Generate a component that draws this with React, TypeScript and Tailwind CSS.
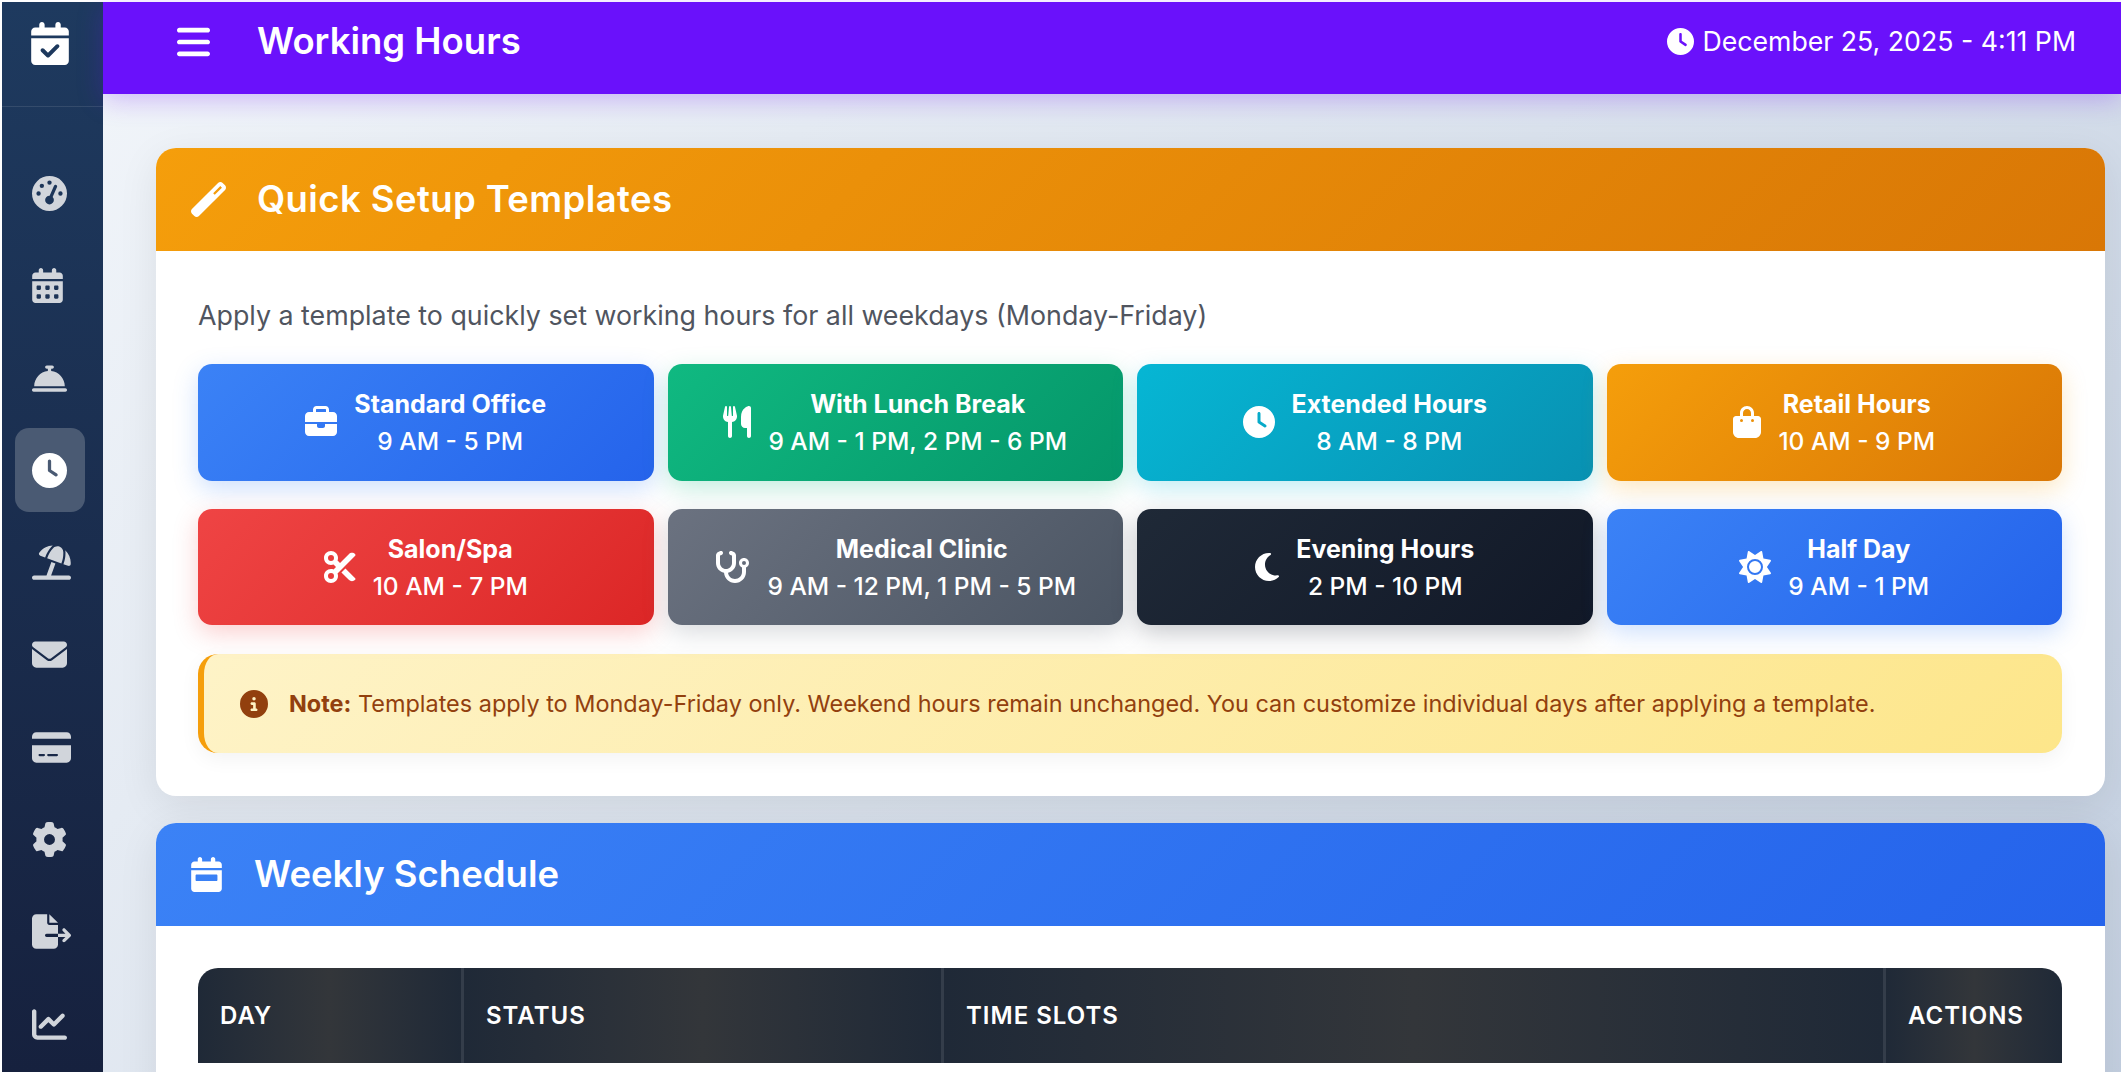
import {
  FaBagShopping,
  FaBars,
  FaBellConcierge,
  FaBriefcase,
  FaCalendarCheck,
  FaCalendarDays,
  FaCalendarWeek,
  FaChartLine,
  FaCircleInfo,
  FaClock,
  FaCreditCard,
  FaEnvelope,
  FaFileExport,
  FaGaugeHigh,
  FaGear,
  FaMoon,
  FaScissors,
  FaStethoscope,
  FaSun,
  FaUmbrellaBeach,
  FaUtensils,
  FaWandMagic,
} from "react-icons/fa6";

const navItems = [
  { icon: FaGaugeHigh, size: "w-[35px]" },
  { icon: FaCalendarDays, size: "w-[31px]" },
  { icon: FaBellConcierge, size: "w-[35px]" },
  { icon: FaClock, size: "w-[35px]", active: true },
  { icon: FaUmbrellaBeach, size: "w-[39px]" },
  { icon: FaEnvelope, size: "w-[35px]" },
  { icon: FaCreditCard, size: "w-[39px]" },
  { icon: FaGear, size: "w-[35px]" },
  { icon: FaFileExport, size: "w-[39px]" },
  { icon: FaChartLine, size: "w-[35px]" },
];

const templates = [
  { icon: FaBriefcase, size: "w-[32px]", name: "Standard Office", hours: "9 AM - 5 PM", color: "from-[#3b82f6] to-[#2563eb] shadow-[0_8px_24px_rgba(59,130,246,0.25)]" },
  { icon: FaUtensils, size: "w-[28px]", name: "With Lunch Break", hours: "9 AM - 1 PM, 2 PM - 6 PM", color: "from-[#10b981] to-[#059669] shadow-[0_8px_24px_rgba(16,185,129,0.25)]" },
  { icon: FaClock, size: "w-[32px]", name: "Extended Hours", hours: "8 AM - 8 PM", color: "from-[#06b6d4] to-[#0891b2] shadow-[0_8px_24px_rgba(6,182,212,0.25)]" },
  { icon: FaBagShopping, size: "w-[28px]", name: "Retail Hours", hours: "10 AM - 9 PM", color: "from-[#f59e0b] to-[#d97706] shadow-[0_8px_24px_rgba(245,158,11,0.25)]" },
  { icon: FaScissors, size: "w-[32px]", name: "Salon/Spa", hours: "10 AM - 7 PM", color: "from-[#ef4444] to-[#dc2626] shadow-[0_8px_24px_rgba(239,68,68,0.25)]" },
  { icon: FaStethoscope, size: "w-[36px]", name: "Medical Clinic", hours: "9 AM - 12 PM, 1 PM - 5 PM", color: "from-[#6b7280] to-[#4b5563] shadow-[0_8px_24px_rgba(107,114,128,0.25)]" },
  { icon: FaMoon, size: "w-[24px]", name: "Evening Hours", hours: "2 PM - 10 PM", color: "from-[#1f2937] to-[#111827] shadow-[0_8px_24px_rgba(31,41,55,0.25)]" },
  { icon: FaSun, size: "w-[32px]", name: "Half Day", hours: "9 AM - 1 PM", color: "from-[#3b82f6] to-[#2563eb] shadow-[0_8px_24px_rgba(59,130,246,0.25)]" },
];

const columns = ["Day", "Status", "Time Slots", "Actions"];

function Sidebar() {
  return (
    <aside className="flex w-[101px] shrink-0 flex-col bg-linear-to-b from-[#1e3a5f] to-[#16213e]">
      <div className="flex h-[105px] shrink-0 items-start border-b border-white/10 pl-[29px] pt-[20px] text-white">
        <FaCalendarCheck className="h-[43px] w-[38px]" />
      </div>
      <nav className="flex flex-col gap-[8.3px] pl-[13px] pt-[44.5px]">
        {navItems.map(({ icon: Icon, size, active }, i) => (
          <div
            key={i}
            className={`flex h-[84px] w-[70px] items-center rounded-[14px] pl-[17px] ${
              active ? "bg-[#4a5a73] text-white" : "text-[#d1d5db]"
            }`}
          >
            <Icon className={`h-[35px] shrink-0 ${size}`} />
          </div>
        ))}
      </nav>
    </aside>
  );
}

function TemplateButton({ template }: { template: (typeof templates)[number] }) {
  const Icon = template.icon;
  return (
    <button
      type="button"
      className={`flex h-[116.5px] items-center justify-center gap-[17px] rounded-[14px] bg-linear-135 text-white ${template.color}`}
    >
      <Icon className={`h-[32px] shrink-0 ${template.size}`} />
      <span className="pt-[2px] text-center text-[24.5px] leading-[37px]">
        <span className="block text-[25px] font-bold">{template.name}</span>
        <span className="block font-medium">{template.hours}</span>
      </span>
    </button>
  );
}

export default function App() {
  return (
    <div className="flex h-[1072px] overflow-hidden bg-white pl-[2px] pt-[2px] font-['Inter',sans-serif]">
      <Sidebar />
      <div className="flex min-w-0 flex-1 flex-col">
        <header className="relative z-10 flex h-[92px] shrink-0 items-center justify-between bg-[#6a11fb] pb-[13px] pl-[74px] pr-[45px] text-white shadow-[0_6px_24px_rgba(106,17,251,0.25)]">
          <div className="flex items-center gap-[47px]">
            <FaBars className="h-[38px] w-[33px]" />
            <h1 className="text-[36.5px] font-semibold leading-none">Working Hours</h1>
          </div>
          <div className="flex items-center gap-2 text-[26.7px]">
            <FaClock className="h-[27px] w-[27px]" />
            <span>December 25, 2025 - 4:11 PM</span>
          </div>
        </header>

        <main className="flex-1 bg-linear-135 from-[#f0f4f9] to-[#c3cfe0] pl-[53px] pr-4 pt-[54px]">
          <section className="rounded-[20px] bg-white shadow-[0_10px_40px_rgba(0,0,0,0.08)]">
            <div className="flex h-[103px] items-center gap-[31px] rounded-t-[20px] bg-linear-135 from-[#f59e0b] to-[#d97706] pl-[35px] text-white">
              <FaWandMagic className="h-[35px] w-[35px]" />
              <h2 className="text-[36.5px] font-semibold leading-none tracking-[0.4px]">Quick Setup Templates</h2>
            </div>
            <div className="pb-[43px] pl-[42px] pr-[43px] pt-[42px]">
              <p className="mb-[27px] text-[26.8px] leading-[44px] text-[#50555f]">
                Apply a template to quickly set working hours for all weekdays (Monday-Friday)
              </p>
              <div className="grid grid-cols-4 gap-x-[14px] gap-y-[28px]">
                {templates.map((t) => (
                  <TemplateButton key={t.name} template={t} />
                ))}
              </div>
              <div className="mt-[29px] flex h-[99px] items-center gap-[21px] rounded-[20px] border-l-[6px] border-[#f59e0b] bg-linear-135 from-[#fef3c7] to-[#fde68a] pl-[36px] text-[23.45px] text-[#92400e] shadow-[0_6px_20px_rgba(0,0,0,0.05)]">
                <FaCircleInfo className="h-[28px] w-[28px] shrink-0" />
                <p>
                  <strong className="font-bold">Note:</strong> Templates apply to Monday-Friday only. Weekend hours remain unchanged. You can customize individual days after applying a template.
                </p>
              </div>
            </div>
          </section>

          <section className="mt-[27px] rounded-[20px] bg-white pb-[60px] shadow-[0_10px_40px_rgba(0,0,0,0.08)]">
            <div className="flex h-[103px] items-center gap-[32px] rounded-t-[20px] bg-linear-135 from-[#3b82f6] to-[#2563eb] pl-[35px] text-white">
              <FaCalendarWeek className="h-[35px] w-[31px]" />
              <h2 className="text-[36.5px] font-semibold leading-none">Weekly Schedule</h2>
            </div>
            <div className="pl-[42px] pr-[43px] pt-[42px]">
              <div className="grid h-[95px] grid-cols-[266px_480px_942px_177px] overflow-hidden rounded-t-[20px]">
                {columns.map((c, i) => (
                  <div
                    key={c}
                    className={`flex items-center bg-linear-to-r from-[#1f2937] via-[#33363a] to-[#1f2937] pl-[22px] text-[24px] font-semibold uppercase tracking-[1px] text-white ${
                      i < 3 ? "border-r-[3px] border-[#343d4a]" : ""
                    }`}
                  >
                    {c}
                  </div>
                ))}
              </div>
            </div>
          </section>
        </main>
      </div>
    </div>
  );
}
